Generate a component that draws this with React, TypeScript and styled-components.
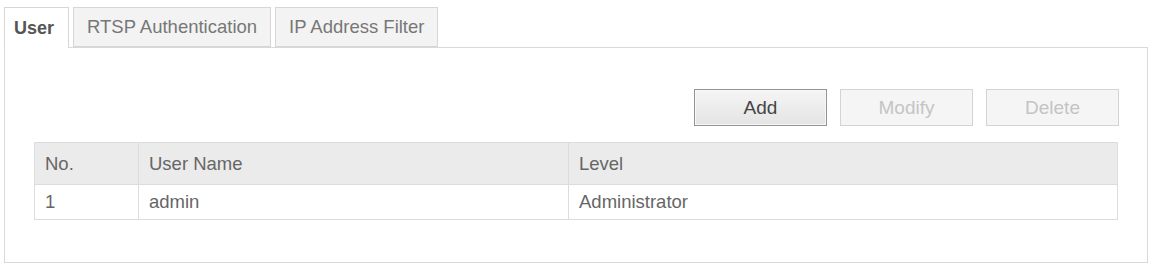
import styled, { createGlobalStyle } from "styled-components";

const GlobalStyle = createGlobalStyle`
  html, body {
    margin: 0;
    padding: 0;
    background: #ffffff;
  }
  body {
    font-family: "Liberation Sans", Arial, sans-serif;
    color: #555;
  }
`;

const Page = styled.div`
  width: 1151px;
  height: 265px;
  box-sizing: border-box;
  padding: 7px 3px 2px 4px;
  display: flex;
  flex-direction: column;
`;

const TabBar = styled.div`
  display: flex;
  align-items: flex-end;
  gap: 4px;
  height: 40px;
  position: relative;
  z-index: 1;
`;

const Tab = styled.div<{ $active?: boolean }>`
  box-sizing: border-box;
  height: ${(p) => (p.$active ? "41px" : "40px")};
  margin-bottom: ${(p) => (p.$active ? "-1px" : "0")};
  display: flex;
  align-items: center;
  border: 1px solid #d6d6d6;
  border-bottom: ${(p) => (p.$active ? "none" : "1px solid #d6d6d6")};
  background: ${(p) => (p.$active ? "#ffffff" : "#f3f3f3")};
  font-size: ${(p) => (p.$active ? "18px" : "18.5px")};
  font-weight: ${(p) => (p.$active ? "bold" : "normal")};
  color: ${(p) => (p.$active ? "#555" : "#777")};
  padding-left: ${(p) => (p.$active ? "9px" : "13px")};
  padding-right: ${(p) => (p.$active ? "14px" : "13px")};
  white-space: nowrap;
`;

const Panel = styled.div`
  flex: 1;
  box-sizing: border-box;
  border: 1px solid #d9d9d9;
  padding: 41px 29px 0 29px;
  display: flex;
  flex-direction: column;
`;

const Toolbar = styled.div`
  display: flex;
  justify-content: flex-end;
  gap: 13px;
  margin-right: -1px;
`;

const Button = styled.button<{ $disabled?: boolean }>`
  box-sizing: border-box;
  width: 133px;
  height: 37px;
  font-family: "Liberation Sans", Arial, sans-serif;
  font-size: 19px;
  border: 1px solid ${(p) => (p.$disabled ? "#d4d4d4" : "#939393")};
  background: ${(p) =>
    p.$disabled ? "#f5f5f5" : "linear-gradient(#f5f5f5, #e4e4e4)"};
  color: ${(p) => (p.$disabled ? "#c4c4c4" : "#444")};
  box-shadow: ${(p) => (p.$disabled ? "none" : "inset 0 0 0 1px #f8f8f8")};
  padding: 0;
`;

const Table = styled.table`
  margin-top: 16px;
  width: 100%;
  border-collapse: collapse;
  font-size: 18.5px;
  color: #666;
`;

const HeadCell = styled.th<{ $w?: string }>`
  width: ${(p) => p.$w ?? "auto"};
  height: 42px;
  box-sizing: border-box;
  padding: 0 10px;
  text-align: left;
  font-weight: normal;
  background: #ebebeb;
  border: 1px solid #dcdcdc;
`;

const Cell = styled.td`
  height: 35px;
  box-sizing: border-box;
  padding: 0 10px;
  border: 1px solid #dcdcdc;
  background: #ffffff;
`;

export default function App() {
  return (
    <>
      <GlobalStyle />
      <Page>
        <TabBar>
          <Tab $active>User</Tab>
          <Tab>RTSP Authentication</Tab>
          <Tab>IP Address Filter</Tab>
        </TabBar>
        <Panel>
          <Toolbar>
            <Button>Add</Button>
            <Button $disabled>Modify</Button>
            <Button $disabled>Delete</Button>
          </Toolbar>
          <Table>
            <thead>
              <tr>
                <HeadCell $w="104px">No.</HeadCell>
                <HeadCell $w="430px">User Name</HeadCell>
                <HeadCell>Level</HeadCell>
              </tr>
            </thead>
            <tbody>
              <tr>
                <Cell>1</Cell>
                <Cell>admin</Cell>
                <Cell>Administrator</Cell>
              </tr>
            </tbody>
          </Table>
        </Panel>
      </Page>
    </>
  );
}
